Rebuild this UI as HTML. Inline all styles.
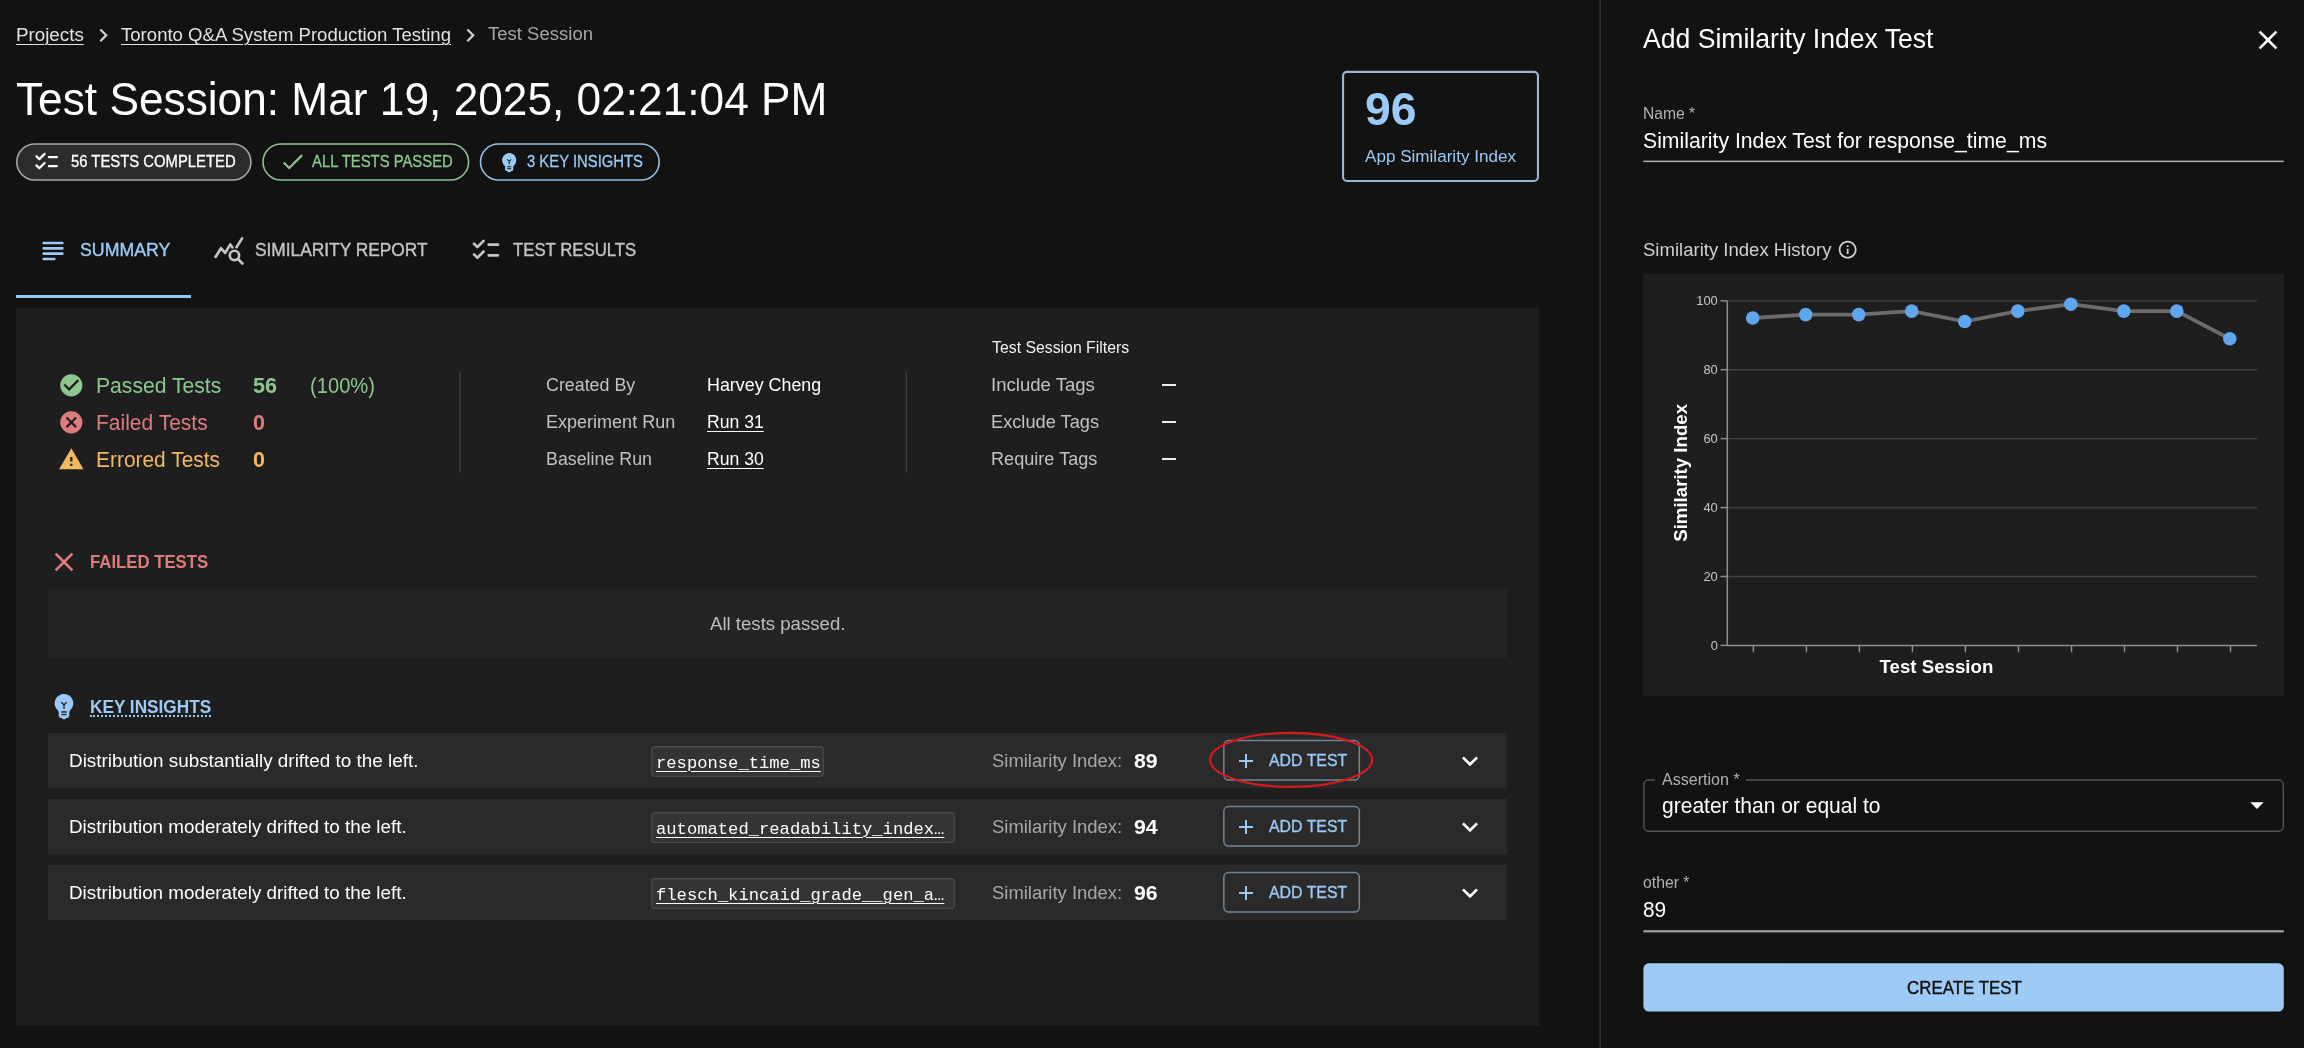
<!DOCTYPE html>
<html lang="en"><head><meta charset="utf-8"><title>Test Session</title>
<style>
*{box-sizing:border-box;margin:0;padding:0}
html,body{width:2304px;height:1048px;overflow:hidden;background:#121212}
body{position:relative;font-family:"Liberation Sans",sans-serif;color:#fff}
#r{position:absolute;left:0;top:0;width:2304px;height:1048px;will-change:transform}
#r>div,.i,.t{position:absolute}
.t{white-space:nowrap;line-height:1;transform-origin:left center;display:block}
</style></head>
<body>
<div id="r">
<span id="t0" class="t" style="left:16px;top:26px;font-size:18.67px;color:#e2e2e2;transform:scaleX(1.0058);text-decoration:underline;text-decoration-thickness:1.3px;text-underline-offset:3px;">Projects</span>
<svg class="i" style="left:89.5px;top:21.8px" width="26.67" height="26.67" viewBox="0 0 24 24" fill="#d0d0d0" ><path d="M10 6L8.59 7.41 13.17 12l-4.58 4.59L10 18l6-6z"/></svg>
<span id="t1" class="t" style="left:121px;top:26px;font-size:18.67px;color:#e2e2e2;transform:scaleX(0.9955);text-decoration:underline;text-decoration-thickness:1.3px;text-underline-offset:3px;">Toronto Q&amp;A System Production Testing</span>
<svg class="i" style="left:457.2px;top:21.8px" width="26.67" height="26.67" viewBox="0 0 24 24" fill="#d0d0d0" ><path d="M10 6L8.59 7.41 13.17 12l-4.58 4.59L10 18l6-6z"/></svg>
<span id="t2" class="t" style="left:488.3px;top:25px;font-size:18.67px;color:#a6a6a6;transform:scaleX(0.9926);">Test Session</span>
<span id="t3" class="t" style="left:16px;top:77px;font-size:45.33px;color:#fff;transform:scaleX(0.9759);">Test Session: Mar 19, 2025, 02:21:04 PM</span>
<svg class="i" style="left:15px;top:142px" width="238" height="40" viewBox="15 142 238 40"><rect x="16.80" y="144.00" width="234.10" height="36.00" rx="18.00" fill="#2c2c2c" stroke="#a8a8a8" stroke-width="1.6"/></svg>
<svg class="i" style="left:32.95px;top:148.2px" width="27.3" height="27.3" viewBox="0 0 24 24" fill="none" stroke="#fff" stroke-width="2" stroke-linecap="round" stroke-linejoin="round"><path d="M14 8H21M14 16H21M3 7.3L5.54 9.8L10.2 5.15M3 15.3L5.54 17.8L10.2 13.15"/></svg>
<span id="t4" class="t" style="left:70.5px;top:154px;font-size:16px;color:#fff;-webkit-text-stroke:0.3px #fff;transform:scaleX(0.9272);">56 TESTS COMPLETED</span>
<svg class="i" style="left:261px;top:142px" width="210" height="40" viewBox="261 142 210 40"><rect x="263.00" y="144.00" width="205.60" height="36.00" rx="18.00" fill="none" stroke="#8fc391" stroke-width="1.6"/></svg>
<svg class="i" style="left:279.2px;top:148.4px" width="27.3" height="27.3" viewBox="0 0 24 24" fill="#8cc88e" ><path d="M9 16.17L4.83 12l-1.42 1.41L9 19 21 7l-1.41-1.41z"/></svg>
<span id="t5" class="t" style="left:311.7px;top:154px;font-size:16px;color:#8cc88e;-webkit-text-stroke:0.3px #8cc88e;transform:scaleX(0.9277);">ALL TESTS PASSED</span>
<svg class="i" style="left:478px;top:142px" width="183" height="40" viewBox="478 142 183 40"><rect x="480.50" y="144.00" width="178.70" height="36.00" rx="18.00" fill="none" stroke="#95c0ea" stroke-width="1.6"/></svg>
<svg class="i" style="left:496.6px;top:149.6px" width="24.4" height="24.4" viewBox="0 0 24 24" fill="#9ccaf6" ><path d="M12 3c-.46 0-.93.04-1.4.14-2.76.53-4.96 2.76-5.48 5.52-.48 2.61.48 5.01 2.22 6.56.43.38.66.91.66 1.47V19c0 1.1.9 2 2 2h.28c.35.6.98 1 1.72 1s1.38-.4 1.72-1H14c1.1 0 2-.9 2-2v-2.31c0-.55.22-1.09.64-1.46C18.09 13.95 19 12.08 19 10c0-3.87-3.13-7-7-7zm2 16h-4v-1h4v1zm0-2h-4v-1h4v1zm-1.5-5.59V14h-1v-2.59L9.67 9.59l.71-.71L12 10.5l1.62-1.62.71.71-1.83 1.82z"/></svg>
<span id="t6" class="t" style="left:526.8px;top:154px;font-size:16px;color:#9ccaf6;-webkit-text-stroke:0.3px #9ccaf6;transform:scaleX(0.9274);">3 KEY INSIGHTS</span>
<svg class="i" style="left:1341px;top:69px" width="199" height="114" viewBox="1341 69 199 114"><rect x="1343.05" y="71.85" width="194.90" height="109.10" rx="3.95" fill="none" stroke="#98b6d8" stroke-width="2.1"/></svg>
<span id="t7" class="t" style="left:1364.6px;top:87px;font-size:45.5px;color:#9ccaf6;font-weight:700;transform:scaleX(1.0193);">96</span>
<span id="t8" class="t" style="left:1365px;top:148px;font-size:17.33px;color:#9ccaf6;transform:scaleX(0.9860);">App Similarity Index</span>
<svg class="i" style="left:36.9px;top:234.5px" width="32" height="32" viewBox="0 0 24 24" fill="none" stroke="#9ccaf6" stroke-width="2" stroke-linecap="round" stroke-linejoin="round"><path d="M5 6H19M5 10H19M5 14H19M5 18H13"/></svg>
<span id="t9" class="t" style="left:79.7px;top:241px;font-size:18.67px;color:#9ccaf6;-webkit-text-stroke:0.4px #9ccaf6;transform:scaleX(0.9502);">SUMMARY</span>
<div style="left:16px;top:295.3px;width:175px;height:2.8px;background:#90caf9"></div>
<svg class="i" style="left:212.7px;top:234.3px" width="32" height="32" viewBox="0 0 24 24" fill="none" stroke="#c4c4c4" stroke-width="2" stroke-linecap="round" stroke-linejoin="round"><path d="M1.9 17.2L6.05 10.7L9.1 14.2L13 7.8L14.5 10.1M17.6 9.9L21.8 3.3M18.7 18.7L22.1 22.1"/><circle cx="16.08" cy="16.08" r="3.5"/></svg>
<span id="t10" class="t" style="left:255px;top:241px;font-size:18.67px;color:#c4c4c4;-webkit-text-stroke:0.4px #c4c4c4;transform:scaleX(0.9283);">SIMILARITY REPORT</span>
<svg class="i" style="left:469.8px;top:234.3px" width="32" height="32" viewBox="0 0 24 24" fill="none" stroke="#c4c4c4" stroke-width="2" stroke-linecap="round" stroke-linejoin="round"><path d="M14 8H21M14 16H21M3 7.3L5.54 9.8L10.2 5.15M3 15.3L5.54 17.8L10.2 13.15"/></svg>
<span id="t11" class="t" style="left:513px;top:241px;font-size:18.67px;color:#c4c4c4;-webkit-text-stroke:0.4px #c4c4c4;transform:scaleX(0.8987);">TEST RESULTS</span>
<div style="left:16px;top:308.4px;width:1522.6px;height:717.6px;background:#1e1e1e"></div>
<svg class="i" style="left:58px;top:371.7px" width="26.67" height="26.67" viewBox="0 0 24 24" fill="#8cc88e" ><path d="M12 2C6.48 2 2 6.48 2 12s4.48 10 10 10 10-4.48 10-10S17.52 2 12 2zm-2 15l-5-5 1.41-1.41L10 14.17l7.59-7.59L19 8l-9 9z"/></svg>
<span id="t12" class="t" style="left:95.8px;top:376px;font-size:21.33px;color:#8cc88e;transform:scaleX(0.9908);">Passed Tests</span>
<span id="t13" class="t" style="left:253.3px;top:376px;font-size:21.33px;color:#8cc88e;font-weight:700;transform:scaleX(1.0112);">56</span>
<span id="t14" class="t" style="left:309.7px;top:376px;font-size:21.33px;color:#8cc88e;transform:scaleX(0.9452);">(100%)</span>
<svg class="i" style="left:58px;top:408.7px" width="26.67" height="26.67" viewBox="0 0 24 24" fill="#dc7c7c" ><path d="M12 2C6.47 2 2 6.47 2 12s4.47 10 10 10 10-4.47 10-10S17.53 2 12 2zm5 13.59L15.59 17 12 13.41 8.41 17 7 15.59 10.59 12 7 8.41 8.41 7 12 10.59 15.59 7 17 8.41 13.41 12 17 15.59z"/></svg>
<span id="t15" class="t" style="left:95.8px;top:413px;font-size:21.33px;color:#dc7c7c;transform:scaleX(0.9848);">Failed Tests</span>
<span id="t16" class="t" style="left:253.3px;top:413px;font-size:21.33px;color:#dc7c7c;font-weight:700;transform:scaleX(1.0105);">0</span>
<svg class="i" style="left:58.3px;top:446.1px" width="26.67" height="26.67" viewBox="0 0 24 24" fill="#f2b862" ><path d="M1 21h22L12 2 1 21zm12-3h-2v-2h2v2zm0-4h-2v-4h2v4z"/></svg>
<span id="t17" class="t" style="left:95.8px;top:450px;font-size:21.33px;color:#f2b862;transform:scaleX(0.9806);">Errored Tests</span>
<span id="t18" class="t" style="left:253.3px;top:450px;font-size:21.33px;color:#f2b862;font-weight:700;transform:scaleX(1.0105);">0</span>
<svg class="i" style="left:458px;top:370px" width="4" height="104" viewBox="458 370 4 104"><rect x="459.40" y="371.70" width="1.40" height="101.00" rx="0.00" fill="#3e3e3e" /></svg>
<span id="t19" class="t" style="left:545.6px;top:376px;font-size:18.67px;color:#c2c2c2;transform:scaleX(0.9558);">Created By</span>
<span id="t20" class="t" style="left:706.9px;top:376px;font-size:18.67px;color:#fff;transform:scaleX(0.9575);">Harvey Cheng</span>
<span id="t21" class="t" style="left:545.6px;top:413px;font-size:18.67px;color:#c2c2c2;transform:scaleX(0.9659);">Experiment Run</span>
<span id="t22" class="t" style="left:706.9px;top:413px;font-size:18.67px;color:#fff;transform:scaleX(0.9440);text-decoration:underline;text-decoration-thickness:1.3px;text-underline-offset:3px;">Run 31</span>
<span id="t23" class="t" style="left:545.6px;top:450px;font-size:18.67px;color:#c2c2c2;transform:scaleX(0.9551);">Baseline Run</span>
<span id="t24" class="t" style="left:706.9px;top:450px;font-size:18.67px;color:#fff;transform:scaleX(0.9440);text-decoration:underline;text-decoration-thickness:1.3px;text-underline-offset:3px;">Run 30</span>
<svg class="i" style="left:904px;top:370px" width="5" height="104" viewBox="904 370 5 104"><rect x="905.70" y="371.70" width="1.40" height="101.00" rx="0.00" fill="#3e3e3e" /></svg>
<span id="t25" class="t" style="left:991.9px;top:340px;font-size:16px;color:#f2f2f2;transform:scaleX(0.9891);">Test Session Filters</span>
<span id="t26" class="t" style="left:990.9px;top:376px;font-size:18.67px;color:#c2c2c2;transform:scaleX(0.9950);">Include Tags</span>
<span id="t27" class="t" style="left:991.4px;top:413px;font-size:18.67px;color:#c2c2c2;transform:scaleX(0.9763);">Exclude Tags</span>
<span id="t28" class="t" style="left:991.2px;top:450px;font-size:18.67px;color:#c2c2c2;transform:scaleX(0.9709);">Require Tags</span>
<div style="left:1162.2px;top:384px;width:14px;height:2px;background:#ececec"></div>
<div style="left:1162.2px;top:421px;width:14px;height:2px;background:#ececec"></div>
<div style="left:1162.2px;top:458px;width:14px;height:2px;background:#ececec"></div>
<svg class="i" style="left:47.55px;top:546.1px" width="32" height="32" viewBox="0 0 24 24" fill="#dc7c7c" ><path d="M19 6.41L17.59 5 12 10.59 6.41 5 5 6.41 10.59 12 5 17.59 6.41 19 12 13.41 17.59 19 19 17.59 13.41 12z"/></svg>
<span id="t29" class="t" style="left:90.4px;top:553px;font-size:18.67px;color:#dc7c7c;font-weight:700;transform:scaleX(0.8979);">FAILED TESTS</span>
<svg class="i" style="left:46px;top:587px" width="1462" height="73" viewBox="46 587 1462 73"><rect x="47.90" y="588.60" width="1459.10" height="69.80" rx="0.00" fill="#242424" /></svg>
<span id="t30" class="t" style="left:709.6px;top:615px;font-size:18.67px;color:#bdbdbd;transform:scaleX(0.9967);">All tests passed.</span>
<svg class="i" style="left:47.5px;top:690.2px" width="32" height="32" viewBox="0 0 24 24" fill="#9ccaf6" ><path d="M12 3c-.46 0-.93.04-1.4.14-2.76.53-4.96 2.76-5.48 5.52-.48 2.61.48 5.01 2.22 6.56.43.38.66.91.66 1.47V19c0 1.1.9 2 2 2h.28c.35.6.98 1 1.72 1s1.38-.4 1.72-1H14c1.1 0 2-.9 2-2v-2.31c0-.55.22-1.09.64-1.46C18.09 13.95 19 12.08 19 10c0-3.87-3.13-7-7-7zm2 16h-4v-1h4v1zm0-2h-4v-1h4v1zm-1.5-5.59V14h-1v-2.59L9.67 9.59l.71-.71L12 10.5l1.62-1.62.71.71-1.83 1.82z"/></svg>
<span id="t31" class="t" style="left:90.4px;top:698px;font-size:18.67px;color:#9ccaf6;font-weight:700;transform:scaleX(0.9229);">KEY INSIGHTS</span>
<div style="left:90.4px;top:714.6px;width:120.8px;height:2px;border-bottom:2px dotted #90caf9"></div>
<svg class="i" style="left:46px;top:731px" width="1462" height="59" viewBox="46 731 1462 59"><rect x="47.90" y="732.70" width="1459.10" height="55.60" rx="0.00" fill="#2a2a2a" /></svg>
<span id="t32" class="t" style="left:69.2px;top:752px;font-size:18.67px;color:#fff;transform:scaleX(1.0121);">Distribution substantially drifted to the left.</span>
<svg class="i" style="left:650px;top:745px" width="175" height="33" viewBox="650 745 175 33"><rect x="651.75" y="746.75" width="171.50" height="29.60" rx="3.35" fill="#343434" stroke="#4a4a4a" stroke-width="1.3"/></svg>
<span id="t33" class="t" style="left:655.7px;top:755px;font-size:17px;color:#fff;font-family:'Liberation Mono', monospace;transform:scaleX(1.0096);text-decoration:underline;text-decoration-thickness:1.3px;text-underline-offset:3px;">response_time_ms</span>
<span id="t34" class="t" style="left:992.2px;top:752px;font-size:18.67px;color:#a8a8a8;transform:scaleX(0.9888);">Similarity Index:</span>
<span id="t35" class="t" style="left:1133.6px;top:752px;font-size:19.5px;color:#fff;font-weight:700;transform:scaleX(1.0874);">89</span>
<svg class="i" style="left:1222px;top:738px" width="140" height="44" viewBox="1222 738 140 44"><rect x="1223.85" y="740.55" width="135.50" height="39.50" rx="4.75" fill="none" stroke="#74859b" stroke-width="1.5"/></svg>
<svg class="i" style="left:1233.95px;top:748.5px" width="24" height="24" viewBox="0 0 24 24" fill="#9ccaf6" ><path d="M19 13h-6v6h-2v-6H5v-2h6V5h2v6h6v2z"/></svg>
<span id="t36" class="t" style="left:1268.6px;top:752px;font-size:17.33px;color:#9ccaf6;-webkit-text-stroke:0.35px #9ccaf6;transform:scaleX(0.9160);">ADD TEST</span>
<svg class="i" style="left:1454.1px;top:744.5px" width="32" height="32" viewBox="0 0 24 24" fill="#fff" ><path d="M16.59 8.59L12 13.17 7.41 8.59 6 10l6 6 6-6z"/></svg>
<svg class="i" style="left:46px;top:797px" width="1462" height="59" viewBox="46 797 1462 59"><rect x="47.90" y="798.70" width="1459.10" height="55.60" rx="0.00" fill="#2a2a2a" /></svg>
<span id="t37" class="t" style="left:69.2px;top:818px;font-size:18.67px;color:#fff;transform:scaleX(1.0082);">Distribution moderately drifted to the left.</span>
<svg class="i" style="left:650px;top:811px" width="306" height="33" viewBox="650 811 306 33"><rect x="651.75" y="812.75" width="302.50" height="29.60" rx="3.35" fill="#343434" stroke="#4a4a4a" stroke-width="1.3"/></svg>
<span id="t38" class="t" style="left:655.7px;top:821px;font-size:17px;color:#fff;font-family:'Liberation Mono', monospace;transform:scaleX(1.0096);text-decoration:underline;text-decoration-thickness:1.3px;text-underline-offset:3px;">automated_readability_index…</span>
<span id="t39" class="t" style="left:992.2px;top:818px;font-size:18.67px;color:#a8a8a8;transform:scaleX(0.9888);">Similarity Index:</span>
<span id="t40" class="t" style="left:1133.6px;top:818px;font-size:19.5px;color:#fff;font-weight:700;transform:scaleX(1.0874);">94</span>
<svg class="i" style="left:1222px;top:804px" width="140" height="44" viewBox="1222 804 140 44"><rect x="1223.85" y="806.55" width="135.50" height="39.50" rx="4.75" fill="none" stroke="#74859b" stroke-width="1.5"/></svg>
<svg class="i" style="left:1233.95px;top:814.5px" width="24" height="24" viewBox="0 0 24 24" fill="#9ccaf6" ><path d="M19 13h-6v6h-2v-6H5v-2h6V5h2v6h6v2z"/></svg>
<span id="t41" class="t" style="left:1268.6px;top:818px;font-size:17.33px;color:#9ccaf6;-webkit-text-stroke:0.35px #9ccaf6;transform:scaleX(0.9160);">ADD TEST</span>
<svg class="i" style="left:1454.1px;top:810.5px" width="32" height="32" viewBox="0 0 24 24" fill="#fff" ><path d="M16.59 8.59L12 13.17 7.41 8.59 6 10l6 6 6-6z"/></svg>
<svg class="i" style="left:46px;top:863px" width="1462" height="59" viewBox="46 863 1462 59"><rect x="47.90" y="864.70" width="1459.10" height="55.60" rx="0.00" fill="#2a2a2a" /></svg>
<span id="t42" class="t" style="left:69.2px;top:884px;font-size:18.67px;color:#fff;transform:scaleX(1.0082);">Distribution moderately drifted to the left.</span>
<svg class="i" style="left:650px;top:877px" width="306" height="33" viewBox="650 877 306 33"><rect x="651.75" y="878.75" width="302.50" height="29.60" rx="3.35" fill="#343434" stroke="#4a4a4a" stroke-width="1.3"/></svg>
<span id="t43" class="t" style="left:655.7px;top:887px;font-size:17px;color:#fff;font-family:'Liberation Mono', monospace;transform:scaleX(1.0096);text-decoration:underline;text-decoration-thickness:1.3px;text-underline-offset:3px;">flesch_kincaid_grade__gen_a…</span>
<span id="t44" class="t" style="left:992.2px;top:884px;font-size:18.67px;color:#a8a8a8;transform:scaleX(0.9888);">Similarity Index:</span>
<span id="t45" class="t" style="left:1133.6px;top:884px;font-size:19.5px;color:#fff;font-weight:700;transform:scaleX(1.0874);">96</span>
<svg class="i" style="left:1222px;top:870px" width="140" height="44" viewBox="1222 870 140 44"><rect x="1223.85" y="872.55" width="135.50" height="39.50" rx="4.75" fill="none" stroke="#74859b" stroke-width="1.5"/></svg>
<svg class="i" style="left:1233.95px;top:880.5px" width="24" height="24" viewBox="0 0 24 24" fill="#9ccaf6" ><path d="M19 13h-6v6h-2v-6H5v-2h6V5h2v6h6v2z"/></svg>
<span id="t46" class="t" style="left:1268.6px;top:884px;font-size:17.33px;color:#9ccaf6;-webkit-text-stroke:0.35px #9ccaf6;transform:scaleX(0.9160);">ADD TEST</span>
<svg class="i" style="left:1454.1px;top:876.5px" width="32" height="32" viewBox="0 0 24 24" fill="#fff" ><path d="M16.59 8.59L12 13.17 7.41 8.59 6 10l6 6 6-6z"/></svg>
<svg class="i" style="left:1200px;top:725px" width="184" height="70" viewBox="1200 725 184 70"><ellipse cx="1291.1" cy="759.85" rx="81" ry="27" fill="none" stroke="#d81b1b" stroke-width="2.1"/></svg>
<svg class="i" style="left:1598px;top:-3px" width="4" height="1054" viewBox="1598 -3 4 1054"><rect x="1599.40" y="-2.00" width="1.40" height="1052.00" rx="0.00" fill="#363636" /></svg>
<span id="t47" class="t" style="left:1642.8px;top:25px;font-size:27.2px;color:#fff;transform:scaleX(0.9775);">Add Similarity Index Test</span>
<svg class="i" style="left:2252.4px;top:23.65px" width="32" height="32" viewBox="0 0 24 24" fill="#fff" ><path d="M19 6.41L17.59 5 12 10.59 6.41 5 5 6.41 10.59 12 5 17.59 6.41 19 12 13.41 17.59 19 19 17.59 13.41 12z"/></svg>
<span id="t48" class="t" style="left:1642.6px;top:106px;font-size:16px;color:#b2b2b2;transform:scaleX(0.9783);">Name *</span>
<span id="t49" class="t" style="left:1642.6px;top:131px;font-size:21.33px;color:#fff;transform:scaleX(0.9946);">Similarity Index Test for response_time_ms</span>
<svg class="i" style="left:1642px;top:159px" width="643" height="5" viewBox="1642 159 643 5"><rect x="1643.40" y="160.60" width="640.40" height="1.50" rx="0.00" fill="#b0b0b0" /></svg>
<span id="t50" class="t" style="left:1642.8px;top:241px;font-size:18.67px;color:#d0d0d0;transform:scaleX(0.9936);">Similarity Index History</span>
<svg class="i" style="left:1837.3px;top:239.3px" width="21.33" height="21.33" viewBox="0 0 24 24" fill="#d0d0d0" ><path d="M11 7h2v2h-2zm0 4h2v6h-2zm1-9C6.48 2 2 6.48 2 12s4.48 10 10 10 10-4.48 10-10S17.52 2 12 2zm0 18c-4.41 0-8-3.59-8-8s3.59-8 8-8 8 3.59 8 8-3.59 8-8 8z"/></svg>
<svg class="i" style="left:1643px;top:274px" width="641" height="422" viewBox="1643 274 641 422" font-family="Liberation Sans, sans-serif">
<rect x="1643" y="274" width="641" height="422" fill="#1e1e1e"/>
<line x1="1727.3" x2="2257" y1="576.5" y2="576.5" stroke="#424242" stroke-width="1.35"/>
<line x1="1727.3" x2="2257" y1="507.6" y2="507.6" stroke="#424242" stroke-width="1.35"/>
<line x1="1727.3" x2="2257" y1="438.6" y2="438.6" stroke="#424242" stroke-width="1.35"/>
<line x1="1727.3" x2="2257" y1="369.7" y2="369.7" stroke="#424242" stroke-width="1.35"/>
<line x1="1727.3" x2="2257" y1="300.8" y2="300.8" stroke="#424242" stroke-width="1.35"/>
<line x1="1727.3" x2="1727.3" y1="300.8" y2="645.4" stroke="#8e8e8e" stroke-width="1.5"/>
<line x1="1727.3" x2="2257" y1="645.4" y2="645.4" stroke="#8e8e8e" stroke-width="1.5"/>
<line x1="1720.5" x2="1727.3" y1="645.4" y2="645.4" stroke="#8e8e8e" stroke-width="1.5"/>
<text x="1717.8" y="650.0" font-size="12.9" fill="#c6c6c6" text-anchor="end">0</text>
<line x1="1720.5" x2="1727.3" y1="576.5" y2="576.5" stroke="#8e8e8e" stroke-width="1.5"/>
<text x="1717.8" y="581.1" font-size="12.9" fill="#c6c6c6" text-anchor="end">20</text>
<line x1="1720.5" x2="1727.3" y1="507.6" y2="507.6" stroke="#8e8e8e" stroke-width="1.5"/>
<text x="1717.8" y="512.2" font-size="12.9" fill="#c6c6c6" text-anchor="end">40</text>
<line x1="1720.5" x2="1727.3" y1="438.6" y2="438.6" stroke="#8e8e8e" stroke-width="1.5"/>
<text x="1717.8" y="443.2" font-size="12.9" fill="#c6c6c6" text-anchor="end">60</text>
<line x1="1720.5" x2="1727.3" y1="369.7" y2="369.7" stroke="#8e8e8e" stroke-width="1.5"/>
<text x="1717.8" y="374.3" font-size="12.9" fill="#c6c6c6" text-anchor="end">80</text>
<line x1="1720.5" x2="1727.3" y1="300.8" y2="300.8" stroke="#8e8e8e" stroke-width="1.5"/>
<text x="1717.8" y="305.4" font-size="12.9" fill="#c6c6c6" text-anchor="end">100</text>
<line x1="1753.4" x2="1753.4" y1="645.4" y2="652.2" stroke="#8e8e8e" stroke-width="1.5"/>
<line x1="1806.4" x2="1806.4" y1="645.4" y2="652.2" stroke="#8e8e8e" stroke-width="1.5"/>
<line x1="1859.4" x2="1859.4" y1="645.4" y2="652.2" stroke="#8e8e8e" stroke-width="1.5"/>
<line x1="1912.4" x2="1912.4" y1="645.4" y2="652.2" stroke="#8e8e8e" stroke-width="1.5"/>
<line x1="1965.4" x2="1965.4" y1="645.4" y2="652.2" stroke="#8e8e8e" stroke-width="1.5"/>
<line x1="2018.5" x2="2018.5" y1="645.4" y2="652.2" stroke="#8e8e8e" stroke-width="1.5"/>
<line x1="2071.5" x2="2071.5" y1="645.4" y2="652.2" stroke="#8e8e8e" stroke-width="1.5"/>
<line x1="2124.5" x2="2124.5" y1="645.4" y2="652.2" stroke="#8e8e8e" stroke-width="1.5"/>
<line x1="2177.5" x2="2177.5" y1="645.4" y2="652.2" stroke="#8e8e8e" stroke-width="1.5"/>
<line x1="2230.5" x2="2230.5" y1="645.4" y2="652.2" stroke="#8e8e8e" stroke-width="1.5"/>
<polyline points="1752.7,318.0 1805.7,314.6 1858.7,314.6 1911.7,311.1 1964.7,321.5 2017.8,311.1 2070.8,304.2 2123.8,311.1 2176.8,311.1 2229.8,338.7" fill="none" stroke="#6c6c6c" stroke-width="3.8" stroke-linejoin="round"/>
<circle cx="1752.7" cy="318.0" r="6.8" fill="#5ea6ee"/>
<circle cx="1805.7" cy="314.6" r="6.8" fill="#5ea6ee"/>
<circle cx="1858.7" cy="314.6" r="6.8" fill="#5ea6ee"/>
<circle cx="1911.7" cy="311.1" r="6.8" fill="#5ea6ee"/>
<circle cx="1964.7" cy="321.5" r="6.8" fill="#5ea6ee"/>
<circle cx="2017.8" cy="311.1" r="6.8" fill="#5ea6ee"/>
<circle cx="2070.8" cy="304.2" r="6.8" fill="#5ea6ee"/>
<circle cx="2123.8" cy="311.1" r="6.8" fill="#5ea6ee"/>
<circle cx="2176.8" cy="311.1" r="6.8" fill="#5ea6ee"/>
<circle cx="2229.8" cy="338.7" r="6.8" fill="#5ea6ee"/>
<text x="1879.6" y="673.3" font-size="18.67" font-weight="700" fill="#fff">Test Session</text>
<text transform="translate(1686.6 472.85) rotate(-90)" text-anchor="middle" font-size="18.67" font-weight="700" fill="#fff">Similarity Index</text>
</svg>
<svg class="i" style="left:1642px;top:778px" width="643" height="55" viewBox="1642 778 643 55"><rect x="1643.90" y="780.00" width="639.40" height="51.20" rx="4.80" fill="none" stroke="#555" stroke-width="1.4"/></svg>
<div style="left:1655px;top:777px;width:91px;height:6px;background:#121212"></div>
<span id="t51" class="t" style="left:1662px;top:772px;font-size:16px;color:#b2b2b2;transform:scaleX(1.0042);">Assertion *</span>
<span id="t52" class="t" style="left:1662px;top:796px;font-size:21.33px;color:#fff;transform:scaleX(0.9854);">greater than or equal to</span>
<svg class="i" style="left:2240.6px;top:789.3px" width="32" height="32" viewBox="0 0 24 24" fill="#fff" ><path d="M7 10l5 5 5-5z"/></svg>
<span id="t53" class="t" style="left:1643.4px;top:875px;font-size:16px;color:#b2b2b2;transform:scaleX(0.9864);">other *</span>
<span id="t54" class="t" style="left:1643.4px;top:900px;font-size:21.33px;color:#fff;transform:scaleX(0.9775);">89</span>
<svg class="i" style="left:1642px;top:929px" width="643" height="5" viewBox="1642 929 643 5"><rect x="1643.40" y="930.20" width="640.40" height="2.20" rx="0.00" fill="#a2a2a2" /></svg>
<svg class="i" style="left:1642px;top:962px" width="643" height="51" viewBox="1642 962 643 51"><rect x="1643.40" y="963.30" width="640.40" height="48.20" rx="5.50" fill="#9ecbf6" /></svg>
<span id="t55" class="t" style="left:1906.5px;top:979px;font-size:18.67px;color:#101010;-webkit-text-stroke:0.4px #101010;transform:scaleX(0.9053);">CREATE TEST</span>
</div>
</body></html>
